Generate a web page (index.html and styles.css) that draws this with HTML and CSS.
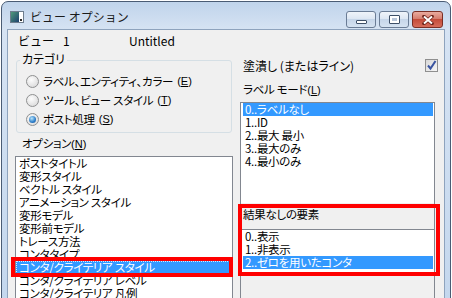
FILE: index.html
```html
<!DOCTYPE html>
<html lang="ja">
<head>
    <meta charset="UTF-8">
    <title>ビュー オプション</title>
    <link rel="stylesheet" href="styles.css">
</head>
<body>
    <div class="window">
        <div class="titlebar">
            <svg class="app-icon" width="14" height="12" viewBox="0 0 14 12">
                <defs>
                    <linearGradient id="icong" x1="0" y1="0" x2="1" y2="1">
                        <stop offset="0" stop-color="#4f9a7a"/>
                        <stop offset="1" stop-color="#1d3f6e"/>
                    </linearGradient>
                </defs>
                <rect x="0.5" y="0.5" width="13" height="11" fill="#fff" stroke="#6d7d8e"/>
                <rect x="1" y="1" width="8" height="10" fill="url(#icong)"/>
                <rect x="10" y="8" width="2" height="2" fill="#2b2b2b"/>
            </svg>
            <span class="title">ビュー オプション</span>
            <div class="caption-buttons">
                <button class="cap"><span class="glyph-min"></span></button>
                <button class="cap"><span class="glyph-max"></span></button>
                <button class="cap close">
                    <svg width="12" height="10" viewBox="0 0 12 10">
                        <path d="M2 1.5 L10 8.5 M10 1.5 L2 8.5" stroke="#6b2219" stroke-width="3.6" stroke-linecap="round"/>
                        <path d="M2 1.5 L10 8.5 M10 1.5 L2 8.5" stroke="#fff" stroke-width="2"/>
                    </svg>
                </button>
            </div>
        </div>

        <div class="content">
            <div class="view-row">
                <span class="view-label">ビュー</span>
                <span class="view-num">1</span>
                <span class="view-name">Untitled</span>
            </div>

            <div class="columns">
                <div class="left">
                    <div class="group">
                        <span class="group-title">カテゴリ</span>
                        <label class="radio"><span class="radio-mark"></span>ラベル、エンティティ、カラー<span class="key">(<u>E</u>)</span></label>
                        <label class="radio"><span class="radio-mark"></span>ツール、ビュー スタイル<span class="key">(<u>T</u>)</span></label>
                        <label class="radio"><span class="radio-mark on"></span>ポスト処理<span class="key">(<u>S</u>)</span></label>
                    </div>

                    <div class="field-label indent">オプション<span class="key">(<u>N</u>)</span></div>
                    <ul class="listbox options">
                        <li>ポストタイトル</li>
                        <li>変形スタイル</li>
                        <li>ベクトル スタイル</li>
                        <li>アニメーション スタイル</li>
                        <li>変形モデル</li>
                        <li>変形前モデル</li>
                        <li>トレース方法</li>
                        <li>コンタタイプ</li>
                        <li class="selected focus marked">コンタ/クライテリア スタイル</li>
                        <li>コンタ/クライテリア レベル</li>
                        <li>コンタ/クライテリア 凡例</li>
                    </ul>
                </div>

                <div class="right">
                    <div class="check-row">
                        <span>塗潰し (またはライン)</span>
                        <span class="checkbox">
                            <svg width="11" height="11" viewBox="0 0 11 11">
                                <path d="M2 5.5 L4.5 8.5 L9.5 1" fill="none" stroke="#3a54a0" stroke-width="2"/>
                            </svg>
                        </span>
                    </div>
                    <div class="field-label">ラベル モード<span class="key">(<u>L</u>)</span></div>

                    <div class="panel">
                        <ul class="listbox label-list">
                            <li class="selected">0..ラベルなし</li>
                            <li>1..ID</li>
                            <li>2..最大 最小</li>
                            <li>3..最大のみ</li>
                            <li>4..最小のみ</li>
                        </ul>

                        <div class="result-group">
                            <div class="result-title">結果なしの要素</div>
                            <ul class="listbox result-list">
                                <li>0..表示</li>
                                <li>1..非表示</li>
                                <li class="selected">2..ゼロを用いたコンタ</li>
                            </ul>
                        </div>
                    </div>
                </div>
            </div>
        </div>
    </div>
</body>
</html>
```

FILE: styles.css
```css
* {
    box-sizing: border-box;
}
body {
    margin: 0;
    background: #fff;
    font-family: "Noto Sans CJK JP", "Liberation Sans", sans-serif;
    font-size: 12px;
    color: #000;
    overflow: hidden;
}
ul {
    list-style: none;
    margin: 0;
    padding: 0;
}

/* window frame */
.window {
    margin: 1px 0 0 1px;
    width: 450px;
    height: 330px;
    padding: 0 5px;
    border: 1px solid #4a5c74;
    border-radius: 7px 7px 0 0;
    background: linear-gradient(#c0d4eb, #d6e3f3 28px, #c2d6ed);
    display: flex;
    flex-direction: column;
}
.titlebar {
    height: 27px;
    display: flex;
    align-items: center;
}
.app-icon {
    margin-left: 3px;
    margin-top: 2px;
}
.title {
    margin-left: 6px;
    margin-top: 1px;
    color: #1b1b1b;
}
.caption-buttons {
    margin-left: auto;
    margin-right: 2px;
    align-self: flex-end;
    margin-bottom: 1px;
    display: flex;
    gap: 3px;
}
.cap {
    width: 30px;
    height: 17px;
    padding: 0;
    border: 1px solid #6a7c95;
    border-radius: 3px;
    background: linear-gradient(#eff4fa, #dde7f3 45%, #c6d6e9 50%, #d5e2f1);
    display: flex;
    align-items: center;
    justify-content: center;
}
.cap.close {
    width: 31px;
    border-color: #7b2e24;
    background: linear-gradient(#e9ab9f, #d67d6e 45%, #c44c3a 50%, #d66c5a);
}
.glyph-min {
    width: 11px;
    height: 4px;
    margin-top: 5px;
    border: 1px solid #3d4f67;
    border-radius: 1px;
    background: #fff;
}
.glyph-max {
    width: 11px;
    height: 9px;
    border: 1px solid #3d4f67;
    border-radius: 1px;
    background: #b7c5d8;
    box-shadow: inset 0 0 0 2px #fff;
}

/* client area */
.content {
    flex: 1;
    border: 1px solid #8ea3bd;
    background: #f0f0f0;
    padding: 4px 0 0 7px;
}
.view-row {
    display: flex;
    height: 13px;
    line-height: 13px;
    padding-left: 3px;
}
.view-label {
    width: 45px;
}
.view-num {
    width: 66px;
}
.columns {
    display: grid;
    grid-template-columns: 218px 199px;
    column-gap: 7px;
}
.radio,
.field-label,
.result-title,
.listbox li {
    font-size: 11.5px;
    letter-spacing: -0.3px;
    font-feature-settings: "palt";
    line-height: 13px;
    white-space: nowrap;
}
.key {
    font-family: "Liberation Sans", sans-serif;
    font-size: 11px;
    letter-spacing: 0;
}

/* category group */
.group {
    position: relative;
    margin: 13px 0 0 1px;
    width: 216px;
    padding: 14px 0 6px 9px;
    border: 1px solid #d5dfe5;
    border-radius: 3px;
    display: flex;
    flex-direction: column;
    gap: 6px;
}
.group-title {
    position: absolute;
    top: -9px;
    left: 3px;
    padding: 0 2px;
    line-height: 13px;
    background: #f0f0f0;
    font-feature-settings: "palt";
}
.radio {
    display: flex;
    align-items: center;
    gap: 4px;
    height: 13px;
}
.radio-mark {
    width: 13px;
    height: 13px;
    border-radius: 50%;
    border: 1px solid #8f9091;
    background: radial-gradient(circle at 40% 35%, #fdfdfd, #dcdcdc 80%);
    display: flex;
    align-items: center;
    justify-content: center;
}
.radio-mark.on::before {
    content: "";
    width: 7px;
    height: 7px;
    border-radius: 50%;
    background: radial-gradient(circle at 40% 35%, #b9e6fb, #2a7bc8 60%, #184f8f);
}

.field-label {
    height: 13px;
    margin: 4px 0 6px;
}
.field-label.indent {
    padding-left: 7px;
}

/* list boxes */
.listbox {
    background: #fff;
}
.listbox li {
    height: 13px;
}
.listbox li.selected {
    background: #3399ff;
    color: #fff;
}
.options {
    height: 170px;
    border: 1px solid #828790;
}
.options li {
    padding-left: 3px;
}
.options li.focus {
    outline: 1px dotted rgba(255, 255, 255, 0.8);
    outline-offset: -1px;
}
.marked {
    position: relative;
}
.marked::after {
    content: "";
    position: absolute;
    left: -5px;
    right: -1px;
    top: -4px;
    bottom: -3px;
    border: 4px solid #ff0000;
}

/* right column */
.check-row {
    display: flex;
    justify-content: space-between;
    align-items: center;
    height: 13px;
    line-height: 13px;
    margin-top: 12px;
    padding: 0 1px 0 3px;
    font-feature-settings: "palt";
    white-space: nowrap;
}
.checkbox {
    width: 13px;
    height: 13px;
    border: 1px solid #8f8f8f;
    background: linear-gradient(135deg, #d8d8d8, #f6f6f6);
    display: flex;
    align-items: center;
    justify-content: center;
}
.right .field-label {
    margin-top: 11px;
    padding-left: 3px;
}
.panel {
    width: 195px;
    height: 200px;
    border: 1px solid #828790;
    border-bottom: none;
    background: #f0f0f0;
}
.label-list,
.result-list {
    padding: 0 1px 0 2px;
}
.label-list li,
.result-list li {
    padding-left: 2px;
}
.label-list {
    height: 100px;
}
.result-group {
    position: relative;
    margin-top: 5px;
}
.result-group::after {
    content: "";
    position: absolute;
    left: -3px;
    right: -6px;
    top: -4px;
    bottom: -4px;
    border: 4px solid #ff0000;
}
.result-title {
    height: 13px;
    padding-left: 2px;
    margin-bottom: 8px;
}
.result-list {
    height: 43px;
    border-top: 1px solid #828790;
}
```
